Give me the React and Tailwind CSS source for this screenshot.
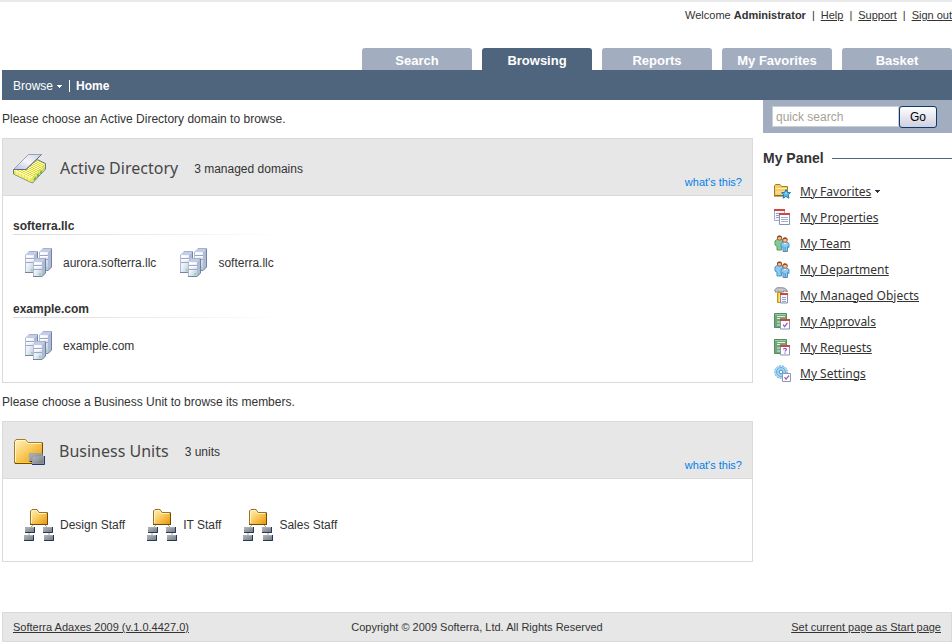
import React, { useState } from 'react';

// --- Page data ---
const TABS = ['Search', 'Browsing', 'Reports', 'My Favorites', 'Basket'];

const DOMAIN_GROUPS = [
    { name: 'softerra.llc', domains: ['aurora.softerra.llc', 'softerra.llc'] },
    { name: 'example.com', domains: ['example.com'] },
];

const UNITS = ['Design Staff', 'IT Staff', 'Sales Staff'];

// --- Large icons ---
const DirectoryIcon = () => (
    <svg width="33" height="30" viewBox="0 0 33 30" aria-hidden="true">
        <defs>
            <linearGradient id="lid" x1="1" y1="0" x2="0" y2="1">
                <stop offset="0" stopColor="#d3d4de" />
                <stop offset="0.5" stopColor="#f6f6fb" />
                <stop offset="1" stopColor="#b9bbe0" />
            </linearGradient>
            <pattern id="pages" width="4" height="2" patternUnits="userSpaceOnUse">
                <rect width="4" height="2" fill="#fffff4" />
                <path d="M0 0h2v1H0zM2 1h2v1H2z" fill="#e6dc00" />
            </pattern>
        </defs>
        <path d="M.5 15.500H13L24 5.500 32.500 9.500V15L19.500 29 .5 20z" fill="url(#pages)" stroke="#5f7f98" />
        <path d="M1 16 19 24V28.500L1 20z" fill="#efe63c" />
        <path d="M1 16 19 24M4 17.500v3.500M7 19v3.500M10 20v3.500M13 21.500v3.500M16 23v3.500" stroke="#fffde0" fill="none" />
        <path d="M19.500 23.500 32 10V15L19.500 28.500z" fill="#d3d93a" />
        <path d="M22 23v3M25 19.500v3.500M28 16.500v3" stroke="#58ac58" strokeWidth="1.500" />
        <path d="M20 24.500 32 12" stroke="#fffbd0" strokeDasharray="2 1" />
        <path d="M.5 15.500 15.500.5H28.500L13 15.500z" fill="url(#lid)" stroke="#98a2b8" />
        <path d="M.5 15.500H13L28.500.5" stroke="#5b728c" fill="none" />
    </svg>
);

const Tower = ({ x, y, h }) => (
    <g transform={`translate(${x} ${y})`}>
        <path d="M0 4 4 0H13L9 4z" fill="#c3cde6" />
        <path d="M4 .5H13" stroke="#a3b0d0" />
        <path d={`M0 4H9V${h}H0z`} fill="url(#tower)" />
        <path d={`M9 4 13 0V${h - 4}L9 ${h}z`} fill="#afbad6" />
        <path d="M1 7.500H9M1 11.500H9" stroke="#9aa7c4" />
        <path d="M1 8.500H9M1 5.500H8" stroke="#fff" />
        <path d={`M.5 4V${h}`} stroke="#b0bbd4" />
        <path d={`M12.500 1V${h - 4}`} stroke="#7581a2" />
        <path d={`M0 ${h - 0.5}H9L12.500 ${h - 4}`} stroke="#78839c" fill="none" />
        <path d={`M6 ${h - 4}h2v2h-2z`} fill="#8fe08a" />
    </g>
);

const ServersIcon = () => (
    <svg width="28" height="30" viewBox="0 0 28 30" aria-hidden="true">
        <defs>
            <linearGradient id="tower" x1="0" y1="0" x2="1" y2="1">
                <stop offset="0" stopColor="#ffffff" />
                <stop offset="0.5" stopColor="#eceff8" />
                <stop offset="1" stopColor="#b4c0dc" />
            </linearGradient>
        </defs>
        <Tower x={14} y={0} h={23} />
        <Tower x={0} y={3} h={22} />
        <Tower x={8} y={10} h={19} />
    </svg>
);

const FolderGradients = () => (
    <defs>
        <linearGradient id="folder" x1="0" y1="0" x2="1" y2="1">
            <stop offset="0" stopColor="#fff3c4" />
            <stop offset="0.45" stopColor="#f9cd62" />
            <stop offset="1" stopColor="#e89400" />
        </linearGradient>
        <linearGradient id="unit" x1="0" y1="0" x2="1" y2="1">
            <stop offset="0" stopColor="#b4b8bc" />
            <stop offset="1" stopColor="#70767c" />
        </linearGradient>
    </defs>
);

const UnitsIcon = () => (
    <svg width="32" height="28" viewBox="-1 -1 32 28" aria-hidden="true">
        <FolderGradients />
        <path d="M.5 24V2.500L2 .5H11.500L14 3.500H28.500V24z" fill="url(#folder)" stroke="#a87b24" />
        <path d="M1.500 23V3L2.500 1.500H11L13.500 4.500H27" stroke="#fff6d2" fill="none" />
        <path d="M1 24.500H29M28.500 4V24" stroke="#6e4c10" />
        <path d="M2 23.500H17" stroke="#ffd21c" />
        <path d="M15.500 14.500H28V22H15.500z" fill="url(#unit)" stroke="#a0a5aa" />
        <path d="M18.500 17.500H30V25H18.500z" fill="url(#unit)" stroke="#9aa0a5" />
        <path d="M18 25.500H30.500V17" stroke="#243a6c" fill="none" />
        <path d="M15.500 22.500H18" stroke="#243a6c" />
    </svg>
);

const UnitIcon = () => (
    <svg width="30" height="32" viewBox="0 0 30 32" aria-hidden="true">
        <FolderGradients />
        <path d="M9 16 5 20V27M21 16 25 20V27" stroke="#a5a5a5" fill="none" />
        <path d="M6.500 15.500V2L8 .5H13L15 3.500H23.500V15.500z" fill="url(#folder)" stroke="#9b7020" />
        <path d="M7.500 14V2.500L8.500 1.500H12.500L14.500 4.500H22" stroke="#fff2c4" fill="none" />
        <path d="M6 15.500H24M23.500 4V15" stroke="#6e4c10" />
        {[[1, 18], [19, 18], [0, 26], [20, 26]].map(([x, y]) => (
            <g key={`${x}-${y}`} transform={`translate(${x} ${y})`}>
                <path d="M0 0H10V6H0z" fill="url(#unit)" />
                <path d="M0 .5H9" stroke="#a9adb2" />
                <path d="M0 5.500H9.500V0" stroke="#25365c" fill="none" />
            </g>
        ))}
    </svg>
);

// --- Small sidebar icons ---
const SmallIcon = ({ children }) => (
    <svg width="17" height="17" viewBox="0 0 17 17" className="shrink-0" aria-hidden="true">
        {children}
    </svg>
);

const FavoritesIcon = () => (
    <SmallIcon>
        <path d="M.5 12.500V2.500L1.500 1.500H6L7.500 3.500H13.500V12.500z" fill="#f5cc66" stroke="#a87c2a" />
        <path d="M1.500 5.500H13" stroke="#fff0b4" />
        <path d="M2 8H12V11H2z" fill="#f8d98a" />
        <path d="M0 13H10" stroke="#7a5818" />
        <path d="m12 6.500 1.400 2.900 3.100.3-2.400 2.100.8 3.400-2.900-1.800-2.900 1.800.8-3.400L7.500 9.700l3.100-.3z" fill="#5cc0ee" stroke="#1f7cb0" />
        <path d="m12 8.500.8 2.200h-1.600z" fill="#c4ecff" />
    </SmallIcon>
);

const PropertiesIcon = () => (
    <SmallIcon>
        <path d="M.5.5H10.500V11.500H.5z" fill="#f4f6fb" stroke="#a3adc6" />
        <path d="M0 0H11V2H0z" fill="#d5453f" />
        <path d="M2 4.500H5M2 6.500H5M2 8.500H5" stroke="#93a2c4" />
        <path d="M5.500 4.500H15.500V15.500H5.500z" fill="#fff" stroke="#8592b2" />
        <path d="M5 4H16V6H5z" fill="#d6423c" />
        <path d="M7 8.500H14M7 10.500H14M7 12.500H14" stroke="#a3b0cc" />
    </SmallIcon>
);

const PeopleIcon = ({ back, backDark }) => (
    <SmallIcon>
        <path d="M1 6 3 4.500H8L9 7V11L7.500 10V15H3V11L1 10z" fill={back} stroke={backDark} />
        <circle cx="5.500" cy="3" r="2.200" fill="#f2bd91" stroke="#a4613c" />
        <path d="M3 3C3 0 8 0 8 3 6.500 1.500 5 2 3 3z" fill="#8f431f" />
        <path d="M7 8.500 9 7H13L15 8.500V12.500L13.500 11.500V16.500H9V11.500L7 12.500z" fill="#8ccaf2" stroke="#4a92c6" />
        <path d="m9.500 7.500 1.500 2 1.500-2z" fill="#fff" />
        <path d="M11.200 12V16" stroke="#4a92c6" />
        <circle cx="11" cy="5" r="2.300" fill="#f5c49b" stroke="#a4613c" />
        <path d="M8.500 5C8 1.500 14 1.500 13.500 5 12 3.500 10 4 8.500 5z" fill="#a04a22" />
    </SmallIcon>
);

const ManagedIcon = () => (
    <SmallIcon>
        <path d="M.5 3 3 .8H8.500C11 1 12.500 2 13.500 4.500L9.500 3.800V5H5L4 3.500 2 5.500z" fill="#c6cbd0" stroke="#7e868d" />
        <path d="M3.500 5.500H7.500V15.500H3.500z" fill="#f7c92a" stroke="#c09420" />
        <path d="M5.500 6V15" stroke="#ffe584" />
        <path d="M6.500 6.500H13.500V16H6.500z" fill="#f6f8fc" stroke="#8592b2" />
        <path d="M6 6H14V8H6z" fill="#d6423c" />
        <path d="M8 10.500H12M8 12.500H12M8 14.500H12" stroke="#93a2c4" />
    </SmallIcon>
);

const FormIcon = ({ children }) => (
    <SmallIcon>
        <path d="M.5.5H12.500V14.500H.5z" fill="#6ea879" stroke="#548c60" />
        <path d="M1 1.500H12" stroke="#9ccba4" />
        <path d="M3 3.500H11M3 5.500H6M3 9H6M3 12H6" stroke="#dff0e0" />
        <path d="M6.500 6.500H15.500V16H6.500z" fill="#fff" stroke="#8b93ae" />
        <path d="M6 6H16V8H6z" fill="#cf4541" />
        {children}
    </SmallIcon>
);

const ApprovalsIcon = () => (
    <FormIcon>
        <path d="m9 11.500 1.500 2.200L13.500 10" stroke="#9a55c6" strokeWidth="1.200" fill="none" />
    </FormIcon>
);

const RequestsIcon = () => (
    <FormIcon>
        <path d="M9.500 10.500C9.500 9 12.500 9 12.500 10.500 12.500 11.500 11 11.500 11 12.500M11 13.500V14.700" stroke="#9a55c6" strokeWidth="1.200" fill="none" />
    </FormIcon>
);

const SettingsIcon = () => (
    <SmallIcon>
        <circle cx="7" cy="7" r="6.300" fill="#b9def5" stroke="#68aeda" strokeDasharray="2 1" />
        <circle cx="7" cy="7" r="4.500" fill="#a5d5f3" stroke="#62aedd" />
        <circle cx="7" cy="7" r="1.800" fill="#fff" stroke="#4a96c8" />
        <path d="M8.500 8.500H16.500V16.500H8.500z" fill="#fff" stroke="#8b96b0" />
        <path d="m10.500 12 1.500 2.200L15 10.500" stroke="#a45cc0" strokeWidth="1.200" fill="none" />
    </SmallIcon>
);

const PANEL_LINKS = [
    { label: 'My Favorites', icon: <FavoritesIcon />, menu: true },
    { label: 'My Properties', icon: <PropertiesIcon /> },
    { label: 'My Team', icon: <PeopleIcon back="#8cc896" backDark="#559a66" /> },
    { label: 'My Department', icon: <PeopleIcon back="#8ccaf2" backDark="#4a92c6" /> },
    { label: 'My Managed Objects', icon: <ManagedIcon /> },
    { label: 'My Approvals', icon: <ApprovalsIcon /> },
    { label: 'My Requests', icon: <RequestsIcon /> },
    { label: 'My Settings', icon: <SettingsIcon /> },
];

const Caret = () => (
    <svg width="5" height="3" viewBox="0 0 5 3" shapeRendering="crispEdges" aria-hidden="true">
        <path d="M0 0H5V1H4V2H3V3H2V2H1V1H0z" fill="currentColor" />
    </svg>
);

// --- Bordered box with a grey title bar ---
const Section = ({ icon, title, count, children }) => (
    <section className="border border-[#dadada]">
        <header className="flex h-[57px] justify-between border-b border-[#dadada] bg-[#e7e7e7] px-2.5">
            <div className="flex items-center pt-1">
                {icon}
                <h2 className="ml-3.5 pb-0.5 font-['Noto_Sans'] text-[16px] leading-5 text-[#484848]">{title}</h2>
                <span className="ml-4">{count}</span>
            </div>
            <a href="#help" className="self-end pb-[5px] text-[11px] leading-4 text-[#0080e8]">what's this?</a>
        </header>
        {children}
    </section>
);

const App = () => {
    const [activeTab, setActiveTab] = useState('Browsing');
    const [query, setQuery] = useState('');

    return (
        <div className="border-t-2 border-[#e9e9ec] bg-white pl-0.5 font-['Liberation_Sans',sans-serif] text-[12px] leading-4 text-[#333]">
            {/* --- User links --- */}
            <div className="flex h-[46px] justify-end pt-[5px] text-[11px]">
                <span>Welcome <b>Administrator</b></span>
                <span className="mx-1.5">|</span>
                <a href="#help" className="underline">Help</a>
                <span className="mx-1.5">|</span>
                <a href="#support" className="underline">Support</a>
                <span className="mx-1.5">|</span>
                <a href="#signout" className="underline">Sign out</a>
            </div>

            {/* --- Tabs --- */}
            <nav className="flex justify-end gap-2.5">
                {TABS.map((tab) => (
                    <button
                        key={tab}
                        type="button"
                        onClick={() => setActiveTab(tab)}
                        className={`h-[22px] w-[110px] rounded-t-[3px] pt-1 text-[13px] leading-[18px] font-bold text-white ${
                            tab === activeTab ? 'bg-[#4f657d]' : 'bg-[#a3adc0]'
                        }`}
                    >
                        {tab}
                    </button>
                ))}
            </nav>
            <div className="flex h-[30px] items-center bg-[#4f657d] px-[11px] pt-0.5 text-white">
                <button type="button" className="flex items-center gap-1">
                    Browse <Caret />
                </button>
                <span className="mr-1.5 ml-[7px] h-3 w-px bg-white" />
                <a href="#home" className="font-bold">Home</a>
            </div>

            <div className="flex gap-2.5">
                <main className="min-w-0 flex-1">
                    <p className="py-[11px]">Please choose an Active Directory domain to browse.</p>
                    <Section icon={<DirectoryIcon />} title="Active Directory" count="3 managed domains">
                        <div className="px-2.5 pt-[22px] pb-[21px]">
                            {DOMAIN_GROUPS.map((group, i) => (
                                <div key={group.name} className={i > 0 ? 'mt-[23px]' : ''}>
                                    <h3 className="font-bold">{group.name}</h3>
                                    <div className="h-px w-[270px] bg-linear-to-r from-[#dadada] to-white" />
                                    <ul className="mt-[13px] flex gap-6 pl-3">
                                        {group.domains.map((domain) => (
                                            <li key={domain}>
                                                <a href="#domain" className="flex items-center gap-2.5">
                                                    <ServersIcon />
                                                    {domain}
                                                </a>
                                            </li>
                                        ))}
                                    </ul>
                                </div>
                            ))}
                        </div>
                    </Section>

                    <p className="py-[11px]">Please choose a Business Unit to browse its members.</p>
                    <Section icon={<UnitsIcon />} title="Business Units" count="3 units">
                        <ul className="flex gap-[22px] px-[21px] pt-[30px] pb-5">
                            {UNITS.map((unit) => (
                                <li key={unit}>
                                    <a href="#unit" className="flex items-center gap-1.5">
                                        <UnitIcon />
                                        {unit}
                                    </a>
                                </li>
                            ))}
                        </ul>
                    </Section>
                </main>

                {/* --- Sidebar --- */}
                <aside className="w-[189px] shrink-0">
                    <form onSubmit={(e) => e.preventDefault()} className="flex h-[33px] items-center bg-[#a3adc0] pl-[9px]">
                        <input
                            type="text"
                            aria-label="quick search"
                            placeholder="quick search"
                            value={query}
                            onChange={(e) => setQuery(e.target.value)}
                            className="h-[21px] w-[127px] border border-[#c9cdd6] bg-white px-[3px] placeholder:text-[#a5a295]"
                        />
                        <button
                            type="submit"
                            className="h-[22px] w-[38px] rounded-[3px] border border-[#0b3a6c] bg-linear-to-b from-white to-[#cfcfe0] text-black"
                        >
                            Go
                        </button>
                    </form>
                    <div className="mt-[17px] flex items-center gap-2">
                        <h2 className="text-[14px] font-bold">My Panel</h2>
                        <div className="h-px flex-1 bg-[#4f657d]" />
                    </div>
                    <ul className="mt-[17px] flex flex-col gap-[9px] pl-[11px] font-['Noto_Sans',sans-serif]">
                        {PANEL_LINKS.map((link) => (
                            <li key={link.label} className="flex items-center">
                                {link.icon}
                                <a href="#panel" className="ml-[9px] underline">{link.label}</a>
                                {link.menu && (
                                    <button type="button" aria-label="Favorites menu" className="ml-1">
                                        <Caret />
                                    </button>
                                )}
                            </li>
                        ))}
                    </ul>
                </aside>
            </div>

            {/* --- Footer --- */}
            <footer className="mt-[50px] grid h-[30px] grid-cols-3 items-center border border-[#dadada] bg-[#e7e7e7] px-2.5 text-[11px]">
                <a href="#about" className="justify-self-start underline">Softerra Adaxes 2009 (v.1.0.4427.0)</a>
                <span className="text-center">Copyright © 2009 Softerra, Ltd. All Rights Reserved</span>
                <a href="#start" className="justify-self-end underline">Set current page as Start page</a>
            </footer>
        </div>
    );
};

export default App;
